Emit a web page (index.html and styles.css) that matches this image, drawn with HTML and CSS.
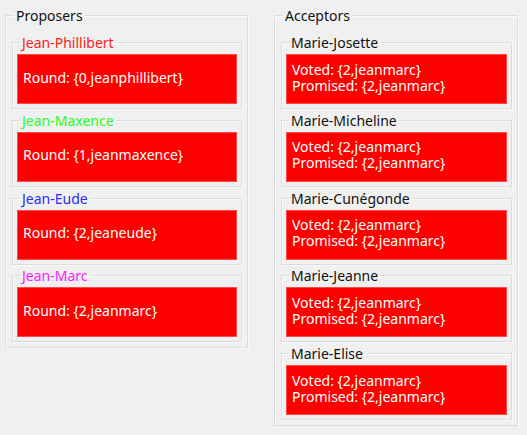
FILE: index.html
```html
<!DOCTYPE html>
<html>
<head>
<meta charset="utf-8">
<link rel="stylesheet" href="styles.css">
</head>
<body>
<div class="app">
  <fieldset class="group proposers">
    <legend class="group-title">Proposers</legend>
    <fieldset class="node">
      <legend class="node-title c-red">Jean-Phillibert</legend>
      <div class="state">Round: {0,jeanphillibert}</div>
    </fieldset>
    <fieldset class="node">
      <legend class="node-title c-green">Jean-Maxence</legend>
      <div class="state">Round: {1,jeanmaxence}</div>
    </fieldset>
    <fieldset class="node">
      <legend class="node-title c-blue">Jean-Eude</legend>
      <div class="state">Round: {2,jeaneude}</div>
    </fieldset>
    <fieldset class="node">
      <legend class="node-title c-magenta">Jean-Marc</legend>
      <div class="state">Round: {2,jeanmarc}</div>
    </fieldset>
  </fieldset>
  <fieldset class="group acceptors">
    <legend class="group-title">Acceptors</legend>
    <fieldset class="node">
      <legend class="node-title">Marie-Josette</legend>
      <div class="state two">Voted: {2,jeanmarc}<br>Promised: {2,jeanmarc}</div>
    </fieldset>
    <fieldset class="node">
      <legend class="node-title">Marie-Micheline</legend>
      <div class="state two">Voted: {2,jeanmarc}<br>Promised: {2,jeanmarc}</div>
    </fieldset>
    <fieldset class="node">
      <legend class="node-title">Marie-Cunégonde</legend>
      <div class="state two">Voted: {2,jeanmarc}<br>Promised: {2,jeanmarc}</div>
    </fieldset>
    <fieldset class="node">
      <legend class="node-title">Marie-Jeanne</legend>
      <div class="state two">Voted: {2,jeanmarc}<br>Promised: {2,jeanmarc}</div>
    </fieldset>
    <fieldset class="node">
      <legend class="node-title">Marie-Elise</legend>
      <div class="state two">Voted: {2,jeanmarc}<br>Promised: {2,jeanmarc}</div>
    </fieldset>
  </fieldset>
</div>
</body>
</html>
```

FILE: styles.css
```css
html, body {
  margin: 0;
  padding: 0;
  background: #f0f0f0;
}
body {
  padding: 7px 0 0 5px;
  font-family: "Noto Sans", "Open Sans", sans-serif;
  font-size: 14px;
  color: #000;
}
.app {
  display: flex;
  align-items: flex-start;
  gap: 26px;
}
fieldset {
  margin: 0;
  min-width: 0;
  box-sizing: border-box;
  border: 1px solid #dcdcdc;
  box-shadow: 1px 1px 0 #fbfbfb, inset 1px 1px 0 #fbfbfb;
}
legend {
  line-height: 17px;
  padding: 0 2px;
}
.group {
  padding: 10px 5px 5px 6px;
}
.proposers { width: 243px; }
.acceptors { width: 244px; }
.group-title {
  margin-left: 2px;
  color: #111;
}
.node {
  padding: 3px 4px 4px 4px;
}
.node + .node {
  margin-top: 2.75px;
}
.node-title {
  margin-left: 3px;
  color: #111;
}
.node-title.c-red { color: #ff1a1a; }
.node-title.c-green { color: #1aff1a; }
.node-title.c-blue { color: #2a2aff; }
.node-title.c-magenta { color: #ff1aff; }
.state {
  height: 50px;
  box-sizing: border-box;
  background: #ff0000;
  border: 1px solid #ff4a4a;
  color: #fff;
  padding: 0 5px 3px 5px;
  display: flex;
  align-items: center;
  line-height: 16px;
  white-space: nowrap;
}
```
